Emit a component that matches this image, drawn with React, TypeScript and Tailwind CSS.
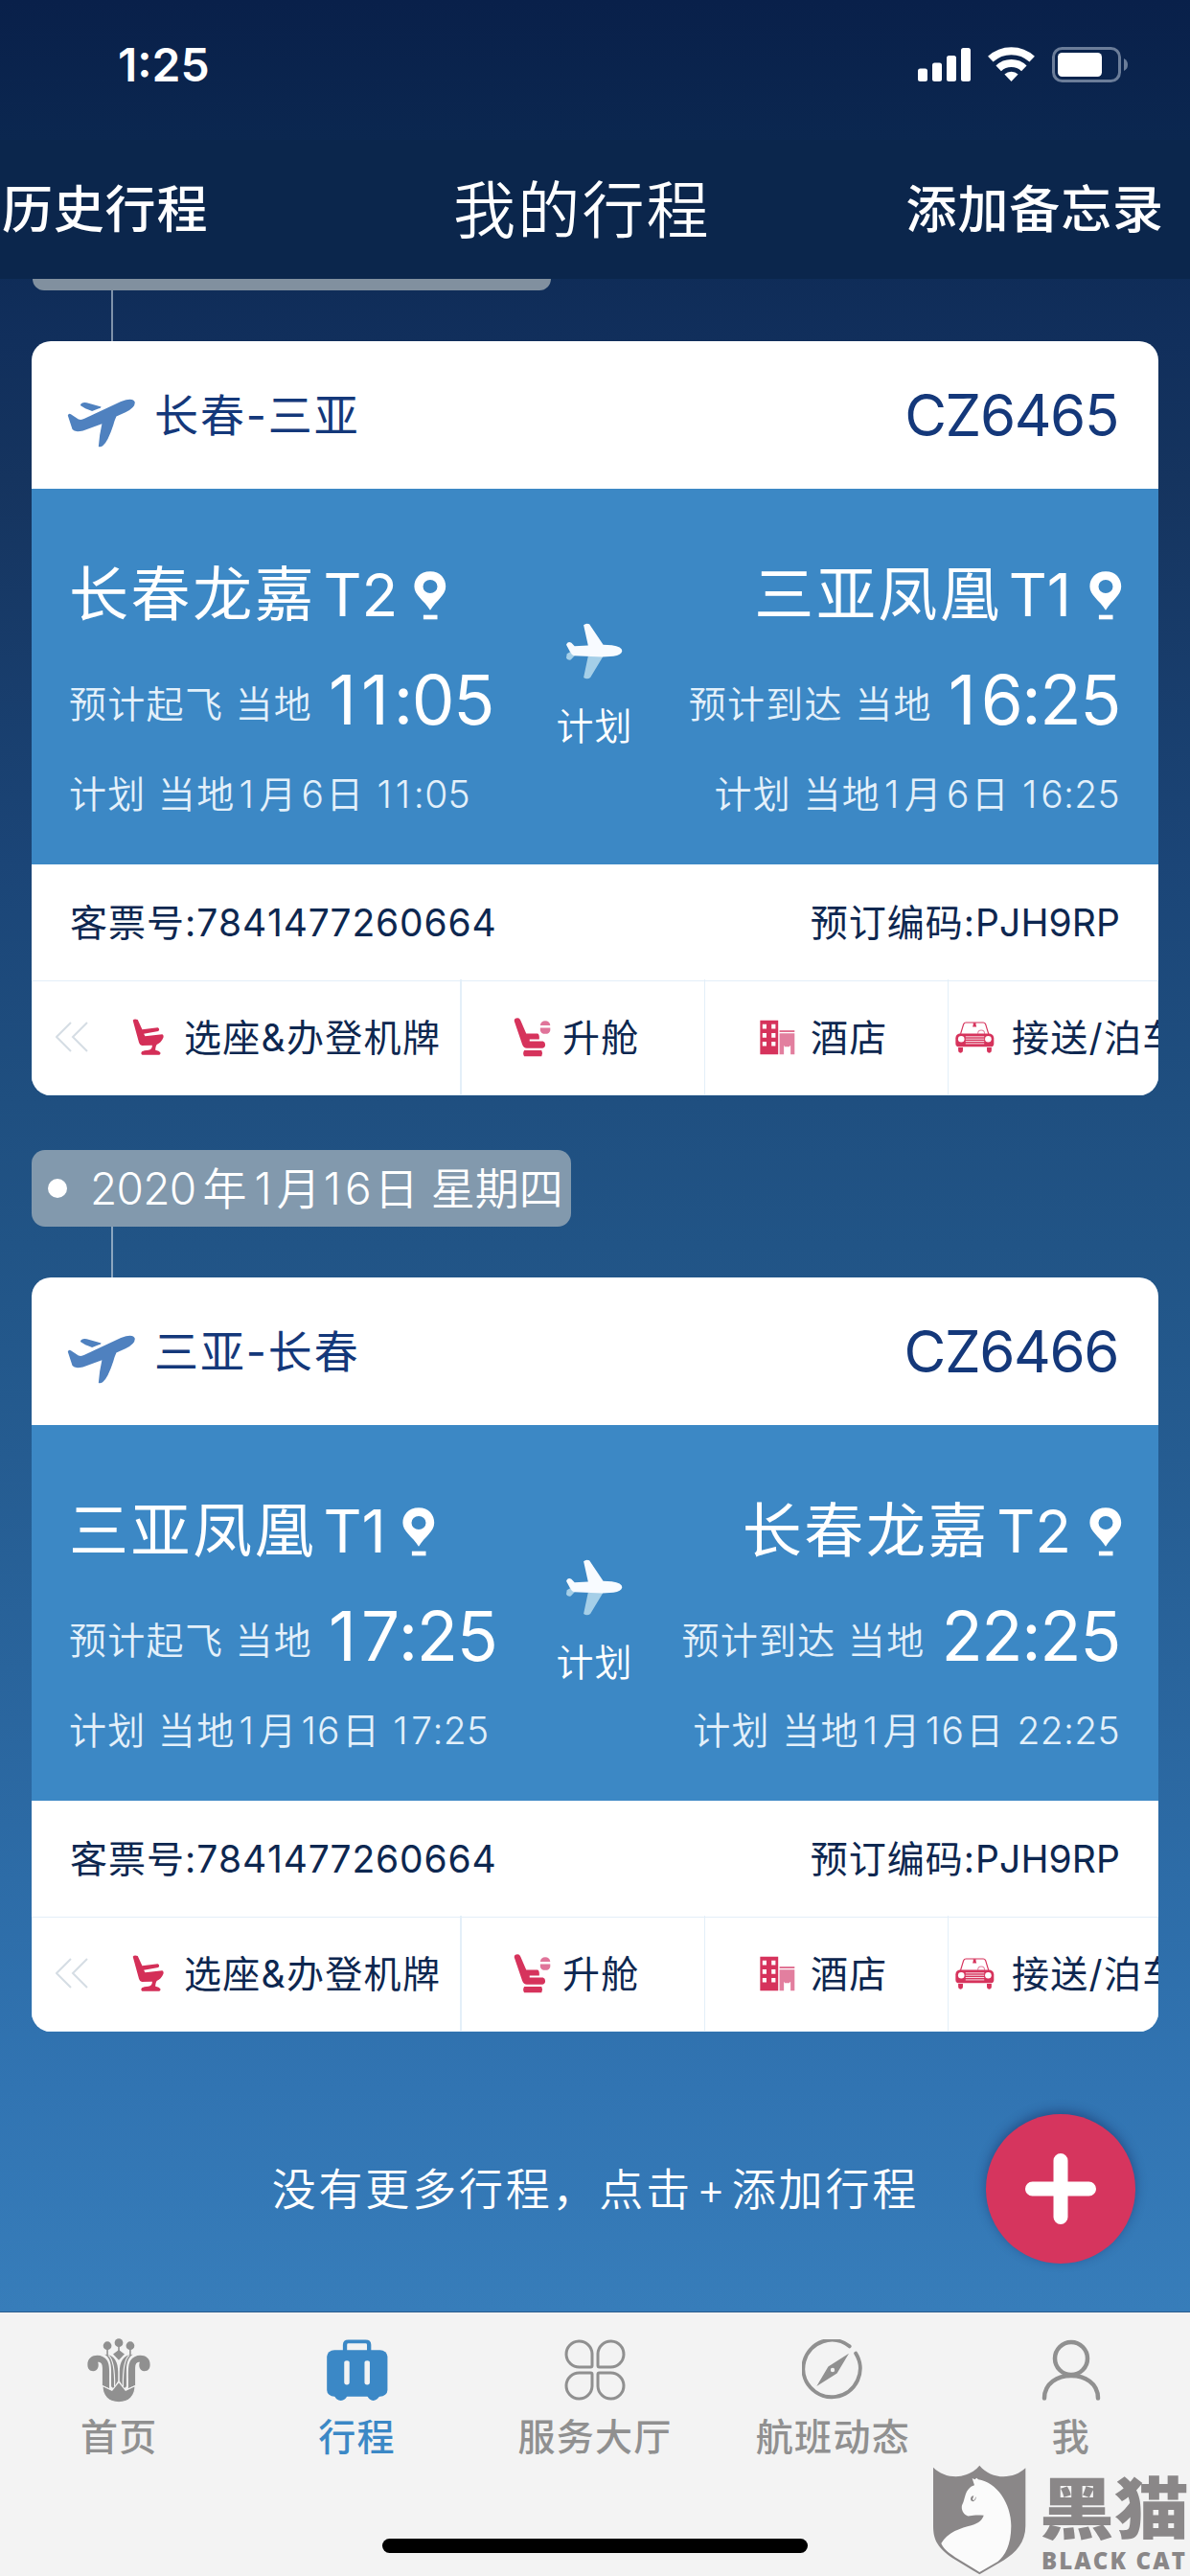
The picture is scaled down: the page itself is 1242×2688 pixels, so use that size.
import type { ReactNode } from "react";

type Stop = {
  airport: string;
  terminal: string;
  label: string;
  time: string;
  month: string;
  day: string;
};

type Trip = {
  route: string;
  flight: string;
  from: Stop;
  to: Stop;
  ticket: string;
  pnr: string;
};

const trips: Trip[] = [
  {
    route: "长春-三亚",
    flight: "CZ6465",
    from: { airport: "长春龙嘉", terminal: "T2", label: "预计起飞 当地", time: "11:05", month: "1", day: "6" },
    to: { airport: "三亚凤凰", terminal: "T1", label: "预计到达 当地", time: "16:25", month: "1", day: "6" },
    ticket: "7841477260664",
    pnr: "PJH9RP",
  },
  {
    route: "三亚-长春",
    flight: "CZ6466",
    from: { airport: "三亚凤凰", terminal: "T1", label: "预计起飞 当地", time: "17:25", month: "1", day: "16" },
    to: { airport: "长春龙嘉", terminal: "T2", label: "预计到达 当地", time: "22:25", month: "1", day: "16" },
    ticket: "7841477260664",
    pnr: "PJH9RP",
  },
];

function StatusIcons() {
  return (
    <svg width="222" height="40" viewBox="956 47 222 40" fill="#fff">
      <rect x="958" y="71.5" width="10" height="13.5" rx="2.5" />
      <rect x="973" y="65.5" width="10" height="19.5" rx="2.5" />
      <rect x="988" y="58" width="10" height="27" rx="2.5" />
      <rect x="1003" y="50" width="10" height="35" rx="2.5" />
      <g fill="none" stroke="#fff" strokeWidth="8">
        <path d="M1033.8 61.7A31.8 31.8 0 0 1 1077.2 61.7" />
        <path d="M1042.2 71.4A19.3 19.3 0 0 1 1068.8 71.4" />
      </g>
      <path d="M1055.5 85L1048.4 77.6A10.6 10.6 0 0 1 1062.6 77.6Z" />
      <rect x="1099.5" y="50.5" width="69" height="34" rx="9" fill="none" stroke="#6b7d99" strokeWidth="3" />
      <rect x="1104" y="55" width="46" height="25" rx="4.5" />
      <path d="M1173 61Q1177 63 1177 67.5T1173 74Z" fill="#6b7d99" />
    </svg>
  );
}

function TakeoffIcon() {
  return (
    <svg width="72" height="51" viewBox="176 1255 182 154" preserveAspectRatio="none" fill="#4f81bf">
      <path d="M178 1308Q180 1300 186 1304L206 1320Q214 1323 222 1318L318 1264Q350 1249 355 1266Q356 1284 330 1298L306 1311Q301 1324 298 1338Q284 1390 270 1404Q264 1408 259 1406Q261 1370 268 1334L218 1356Q196 1362 190 1352Z" />
      <path d="M211 1276Q214 1265 228 1268L266 1281Q266 1285 258 1287L242 1294Q222 1286 211 1276Z" />
    </svg>
  );
}

function PinIcon() {
  return (
    <svg width="34" height="51" viewBox="1090 284 86 153" preserveAspectRatio="none" fill="#fff">
      <path
        fillRule="evenodd"
        d="M1133 285C1160 285 1174 308 1174 332C1174 360 1150 374 1133 406C1116 374 1091 360 1091 332C1091 308 1106 285 1133 285ZM1133 311A19 21 0 1 0 1133 353A19 21 0 1 0 1133 311Z"
      />
      <rect x="1115" y="421" width="37" height="14" />
    </svg>
  );
}

function PlaneIcon() {
  return (
    <svg width="59" height="59" viewBox="38 30 176 176">
      <path fill="#a5cfe8" d="M106 134H153L113 200Q103 207 92 200ZM40 126L50 120L64 132L52 145Q40 147 38 139Z" />
      <path
        fill="#f8fbff"
        d="M92 37Q100 29 110 34L153 98L180 99Q212 104 212 117Q210 130 185 134L150 136L62 132Q54 128 50 120L38 98Q42 86 54 92L64 102L106 100Z"
      />
    </svg>
  );
}

function BackIcon() {
  return (
    <svg width="34" height="32" viewBox="0 0 34 32" fill="none" stroke="#d5dde4" strokeWidth="2">
      <path d="M16 1L1 16L16 31M33 1L18 16L33 31" />
    </svg>
  );
}

function SeatIcon() {
  return (
    <svg width="33" height="38" viewBox="290 103 98 114" preserveAspectRatio="none" fill="#d42f58">
      <path d="M292 108Q296 102 307 106L321 137L369 131Q377 135 371 142L326 150L330 158L383 152Q389 155 386 163Q380 178 366 184Q361 192 362 201Q374 203 377 209Q379 215 374 216H321Q315 212 320 206Q326 201 340 201Q352 200 352 186L320 187Q313 185 311 178Z" />
    </svg>
  );
}

function UpgradeIcon() {
  return (
    <svg width="39" height="41" viewBox="44 64 112 124" preserveAspectRatio="none" fill="#d6335c">
      <path d="M46 74Q46 65 56 65Q62 65 65 72L82 114H116Q122 116 121 132H92V138H132Q139 140 139 149Q139 159 131 160H84Q74 160 70 148Z" />
      <path d="M76 167H128Q133 177 128 186H76Q70 177 76 167Z" />
      <path fill="#e0749a" d="M124 88Q126 74 139 74Q152 74 154 88ZM124 96H154V104Q152 115 139 115Q126 115 124 104Z" />
    </svg>
  );
}

function HotelIcon() {
  return (
    <svg width="37" height="37" viewBox="793 79 106 109" preserveAspectRatio="none">
      <path
        fill="#d6335c"
        fillRule="evenodd"
        d="M794 81H848V186H794ZM801 93V107H813V93ZM828 93V107H840V93ZM801 120V134H813V120ZM828 120V134H840V120ZM801 147V160H813V147ZM828 147V160H840V147Z"
      />
      <path fill="#e27f9f" d="M852 121H897V186H885V159H882V162H867V159H865V186H852Z" />
      <rect x="852" y="112" width="45" height="5" fill="#dd5c82" />
    </svg>
  );
}

function CarIcon() {
  return (
    <svg width="41" height="33" viewBox="1386 88 118 98" preserveAspectRatio="none" className="shrink-0">
      <path d="M1402 126L1411 96Q1413 91 1418 91H1470Q1475 91 1477 96L1486 126" fill="none" stroke="#d6335c" strokeWidth="3.5" />
      <path d="M1440 92H1448V98L1450 104H1438L1440 98Z" fill="#d6335c" />
      <path d="M1454 126Q1454 115 1464 115T1474 126" fill="none" stroke="#e27f9f" strokeWidth="3" />
      <path
        d="M1398 125H1490Q1502 128 1502 140V156Q1502 166 1492 166H1398Q1387 166 1387 156V140Q1387 128 1398 125Z"
        fill="#d6335c"
      />
      <circle cx="1404" cy="142" r="9.5" fill="#fff" />
      <circle cx="1485" cy="142" r="9.5" fill="#fff" />
      <path d="M1417 135H1473M1417 142H1473M1417 149H1473M1417 156H1473" stroke="#fff" strokeWidth="2.5" />
      <path d="M1395 168H1409V178Q1409 185 1402 185T1395 178ZM1481 168H1495V178Q1495 185 1488 185T1481 178Z" fill="#d6335c" />
    </svg>
  );
}

// Inter's "1" is narrow, so give it some room to keep the times even
function Digits({ value }: { value: string }) {
  return (
    <>
      {value.split("").map((ch, i) =>
        ch === "1" ? (
          <span key={i} className="mr-[0.09em]">
            1
          </span>
        ) : (
          ch
        ),
      )}
    </>
  );
}

function StopColumn({ stop, right }: { stop: Stop; right?: boolean }) {
  return (
    <div className={right ? "flex flex-1 flex-col items-end" : "flex flex-1 flex-col items-start"}>
      <div
        className={
          right
            ? "mt-[71px] -mr-[2px] flex h-20 items-center text-[62px] font-[370]"
            : "mt-[71px] flex h-20 items-center text-[62px] font-[370]"
        }
      >
        <span className="tracking-[2.6px]">{stop.airport}</span>
        <span className="ml-[7px]">{stop.terminal}</span>
        <span className={right ? "ml-[19px]" : "ml-[17px]"}>
          <PinIcon />
        </span>
      </div>
      <div className="mt-[29px] flex h-20 items-center whitespace-nowrap">
        <span className="mt-2 text-[39px] font-[350] tracking-[1.3px] text-[#e3f0fa]">{stop.label}</span>
        <span className="ml-[17px] text-[71px] font-[380] tracking-[-1.4px]">
          <Digits value={stop.time} />
        </span>
      </div>
      <div className="mt-[33px] flex h-[50px] items-center text-[39px] font-[350] tracking-[1.3px] whitespace-nowrap text-[#e3f0fa]">
        计划 当地<span className="ml-1">{stop.month}</span>
        <span className="ml-[4px]">月</span>
        <span className="ml-[4px]">{stop.day}</span>
        <span className="ml-px">日</span>
        <span className="ml-[13px] tracking-[0.3px]">
          <Digits value={stop.time} />
        </span>
      </div>
    </div>
  );
}

function TripCard({ trip }: { trip: Trip }) {
  return (
    <div className="mx-[33px] h-[787px] overflow-hidden rounded-[20px] bg-white">
      <div className="flex h-[154px] items-center justify-between pr-[42px] pl-[37px] text-[#14387a]">
        <div className="flex items-center">
          <div className="mt-4">
            <TakeoffIcon />
          </div>
          <span className="ml-[19px] text-[46px] tracking-[1.9px]">{trip.route}</span>
        </div>
        <span className="text-[60px] tracking-[-1.4px]">{trip.flight}</span>
      </div>

      <div className="flex h-[392px] bg-[#3c88c5] pr-[40px] pl-[39px] text-white">
        <StopColumn stop={trip.from} />
        <div className="flex w-20 flex-col items-center pt-[140px]">
          <PlaneIcon />
          <span className="mt-[21px] text-[39px] leading-[56px] font-[350] tracking-[1px]">计划</span>
        </div>
        <StopColumn stop={trip.to} right />
      </div>

      <div className="flex h-[121px] items-center justify-between px-[40px] text-[39px] text-[#0d2750]">
        <span className="tracking-[0.8px]">
          <span className="tracking-[1px]">客票号:</span>
          {trip.ticket}
        </span>
        <span className="tracking-[0.1px]">
          <span className="tracking-[1px]">预订编码:</span>
          {trip.pnr}
        </span>
      </div>

      <div className="flex h-[120px] items-center border border-[#e3eff8] pb-[2px] text-[39px] tracking-[1.3px] whitespace-nowrap text-[#0d2750]">
        <div className="flex h-[120px] w-[448px] shrink-0 items-center border-r-2 border-[#e3eff8] pl-6">
          <BackIcon />
          <span className="ml-[46px]">
            <SeatIcon />
          </span>
          <span className="ml-[21px]">选座&办登机牌</span>
        </div>
        <div className="flex h-[120px] w-[254px] shrink-0 items-center border-r border-[#e3eff8] pl-[54px]">
          <UpgradeIcon />
          <span className="ml-3">升舱</span>
        </div>
        <div className="flex h-[120px] w-[254px] shrink-0 items-center border-r border-[#e3eff8] pl-[57px]">
          <HotelIcon />
          <span className="ml-4">酒店</span>
        </div>
        <div className="flex h-[120px] items-center pl-[7px]">
          <CarIcon />
          <span className="ml-[18px]">接送/泊车</span>
        </div>
      </div>
    </div>
  );
}

function FlowerIcon() {
  const half = (
    <>
      <path d="M231 252C230 218 270 214 283 240C289 255 288 270 288 300V326L270 316V262C270 248 265 242 258 244C262 256 258 272 246 272C236 272 231 264 231 252Z" />
      <path d="M276 220C302 220 311 245 311 275V303L299 326L293 320V270C293 245 288 230 276 220Z" />
      <path d="M286 223Q303 240 302 320" fill="none" stroke="#f3f3f3" strokeWidth="3" />
    </>
  );
  return (
    <svg width="66" height="67" viewBox="230 170 166 200" preserveAspectRatio="none" fill="#909090">
      {half}
      <g transform="translate(626 0) scale(-1 1)">{half}</g>
      <path
        d="M270 318L295 332L313 306L331 332L356 318C356 350 340 369 313 369C286 369 270 350 270 318Z"
        stroke="#f3f3f3"
        strokeWidth="3"
      />
      <ellipse cx="283" cy="193" rx="11" ry="13" />
      <ellipse cx="313" cy="184" rx="11" ry="13" />
      <ellipse cx="343" cy="193" rx="11" ry="13" />
      <path d="M283 200V222M343 200V222M313 190V212" stroke="#909090" strokeWidth="4" />
      <path d="M313 206L328 219L313 238L298 219Z" />
    </svg>
  );
}

function SuitcaseIcon() {
  return (
    <svg width="66" height="65" viewBox="858 182 168 196" preserveAspectRatio="none" fill="#3b88c6">
      <path d="M909 220V199Q909 189 918 189H964Q973 189 973 199V220" fill="none" stroke="#3b88c6" strokeWidth="11" />
      <rect x="861" y="216" width="161" height="146" rx="20" />
      <path d="M880 358Q886 375 898 375T916 358ZM967 358Q974 375 984 375T1003 358Z" />
      <rect x="907" y="249" width="14" height="76" rx="7" fill="#f3f3f3" />
      <rect x="961" y="249" width="14" height="76" rx="7" fill="#f3f3f3" />
    </svg>
  );
}

function HallIcon() {
  const petal = "M29 15V27.5Q29 29 27.5 29H16A13.5 13.5 0 1 1 29 15Z";
  return (
    <svg width="64" height="66" viewBox="0 -1 64 66" fill="none" stroke="#909090" strokeWidth="3">
      <path d={petal} />
      <path d={petal} transform="translate(64 0) scale(-1 1)" />
      <path d={petal} transform="translate(0 64) scale(1 -1)" />
      <path d={petal} transform="translate(64 64) scale(-1 -1)" />
    </svg>
  );
}

function CompassIcon() {
  return (
    <svg width="64" height="64" viewBox="0 0 64 64">
      <path d="M56.2 14.7A29.7 29.7 0 1 1 49.6 7.3" fill="none" stroke="#909090" strokeWidth="4" strokeLinecap="round" />
      <path
        fill="#909090"
        fillRule="evenodd"
        d="M49 14.7L36.6 35.5L15.3 49L27.4 28.5ZM32 29.8A2.2 2.2 0 1 0 32 34.2A2.2 2.2 0 1 0 32 29.8Z"
      />
    </svg>
  );
}

function PersonIcon() {
  return (
    <svg width="64" height="64" viewBox="0 0 64 64" fill="none" stroke="#909090" strokeWidth="4.5" strokeLinecap="round">
      <circle cx="32" cy="20" r="17" />
      <path d="M4 61.5C4 30 60 30 60 61.5" />
    </svg>
  );
}

function Tab({ icon, label, active }: { icon: ReactNode; label: string; active?: boolean }) {
  return (
    <div className="flex flex-1 flex-col items-center">
      <div className="flex h-[68px] items-center">{icon}</div>
      <span
        className={
          active
            ? "mt-2 text-[39px] leading-[56px] font-medium tracking-[1.3px] text-[#3b88c6]"
            : "mt-2 text-[39px] leading-[56px] font-medium tracking-[1.3px] text-[#909090]"
        }
      >
        {label}
      </span>
    </div>
  );
}

function Watermark() {
  return (
    <div className="absolute right-0 bottom-0 flex h-[116px] w-[269px]">
      <svg width="98" height="115" viewBox="38 38 294 346" preserveAspectRatio="none" className="shrink-0">
        <path
          fill="#8a8788"
          d="M41 46C80 85 150 85 186 40C222 85 292 85 330 48V230C330 280 300 315 262 337L186 382L100 330C60 300 41 280 41 230Z"
        />
        <path
          fill="#fbfbfb"
          d="M66 285C85 248 130 236 160 228C185 222 195 210 199 197C180 194 165 197 150 199C135 194 128 178 131 165C142 148 138 112 170 102L163 80L171 84L177 79L182 84C240 92 285 160 285 230C285 290 265 325 243 342L186 375L110 328C85 312 72 300 66 285Z"
        />
        <path fill="#8a8788" d="M158 146Q158 136 168 135L164 146L168 150Q174 144 174 137Q178 148 166 153Q158 152 158 146Z" />
      </svg>
      <div className="ml-[14px] flex flex-col text-[#8a8788]">
        <span className="mt-2 origin-center scale-y-90 text-[78px] leading-[78px] font-black whitespace-nowrap">黑猫</span>
        <span className="mt-[2px] ml-[2px] font-['Open_Sans'] text-[24px] leading-[24px] font-extrabold tracking-[2.1px] whitespace-nowrap">
          BLACK CAT
        </span>
      </div>
    </div>
  );
}

export default function App() {
  return (
    <div className="relative flex h-[2688px] w-[1242px] flex-col overflow-hidden bg-linear-[180deg,#09204a_0px,#0b2750_146px,#112f5c_356px,#15345f_500px,#1b4577_900px,#1f4f80_1150px,#215486_1300px,#3174b2_2180px,#377dba_2412px] font-['Inter','Noto_Sans_CJK_SC',sans-serif] leading-none [font-kerning:none]">
      <div className="flex h-[146px] items-start justify-between pt-[47px] pr-16 pl-[123px] text-white">
        <span className="text-[48px] leading-[42px] font-semibold">1:25</span>
        <StatusIcons />
      </div>

      <div className="flex h-[145px] items-center bg-[#0b264c] pt-[2px] text-white">
        <span className="w-[473px] pl-[2px] text-[53px] font-medium tracking-[0.8px]">历史行程</span>
        <span className="w-[300px] text-[65px] font-[350] tracking-[2.2px]">我的行程</span>
        <span className="flex-1 pr-[27px] text-right text-[53px] font-medium tracking-[0.9px]">添加备忘录</span>
      </div>

      <div className="h-[2121px]">
        <div className="ml-[34px] h-3 w-[541px] rounded-b-[12px] bg-[#81909f]" />
        <div className="ml-[116px] h-[53px] w-[2px] bg-[#7f92aa]" />
        <TripCard trip={trips[0]} />

        <div className="mt-[57px] ml-[33px] flex h-20 w-[563px] items-center rounded-[14px] bg-[#8299ad] pl-[17px] text-[46px] font-[350] whitespace-nowrap text-white">
          <span className="size-5 rounded-full bg-white" />
          <span className="ml-[24px] tracking-[-0.7px]">2020</span>
          <span className="ml-[7px]">年</span>
          <span className="ml-2">
            <Digits value="1" />
          </span>
          <span className="ml-px">月</span>
          <span className="ml-[3px]">
            <Digits value="16" />
          </span>
          <span className="ml-[3px]">日</span>
          <span className="ml-[13px]">星期四</span>
        </div>
        <div className="ml-[116px] h-[53px] w-[2px] bg-[#8ba6bf]" />
        <TripCard trip={trips[1]} />

        <div className="mt-[86px] flex h-[156px] items-center justify-end pr-[57px]">
          <span className="mr-[70px] text-[46px] font-[350] tracking-[2.8px] whitespace-nowrap text-white">
            没有更多行程，点击<span className="mx-1">+</span>添加行程
          </span>
          <button className="flex size-[156px] items-center justify-center rounded-full bg-[#d6355e] shadow-[0_-3px_12px_rgba(20,30,80,0.45)]">
            <svg width="74" height="74" viewBox="0 0 74 74" stroke="#fff" strokeWidth="15" strokeLinecap="round">
              <path d="M37 7.5V66.5M7.5 37H66.5" />
            </svg>
          </button>
        </div>
      </div>

      <div className="flex h-[276px] border-t border-[#2a5c8c] bg-[#f3f3f3] pt-[26px]">
        <Tab icon={<FlowerIcon />} label="首页" />
        <Tab icon={<SuitcaseIcon />} label="行程" active />
        <Tab icon={<HallIcon />} label="服务大厅" />
        <Tab icon={<CompassIcon />} label="航班动态" />
        <Tab icon={<PersonIcon />} label="我" />
      </div>

      <div className="absolute bottom-6 left-[399px] h-[15px] w-[444px] rounded-full bg-black" />
      <Watermark />
    </div>
  );
}
